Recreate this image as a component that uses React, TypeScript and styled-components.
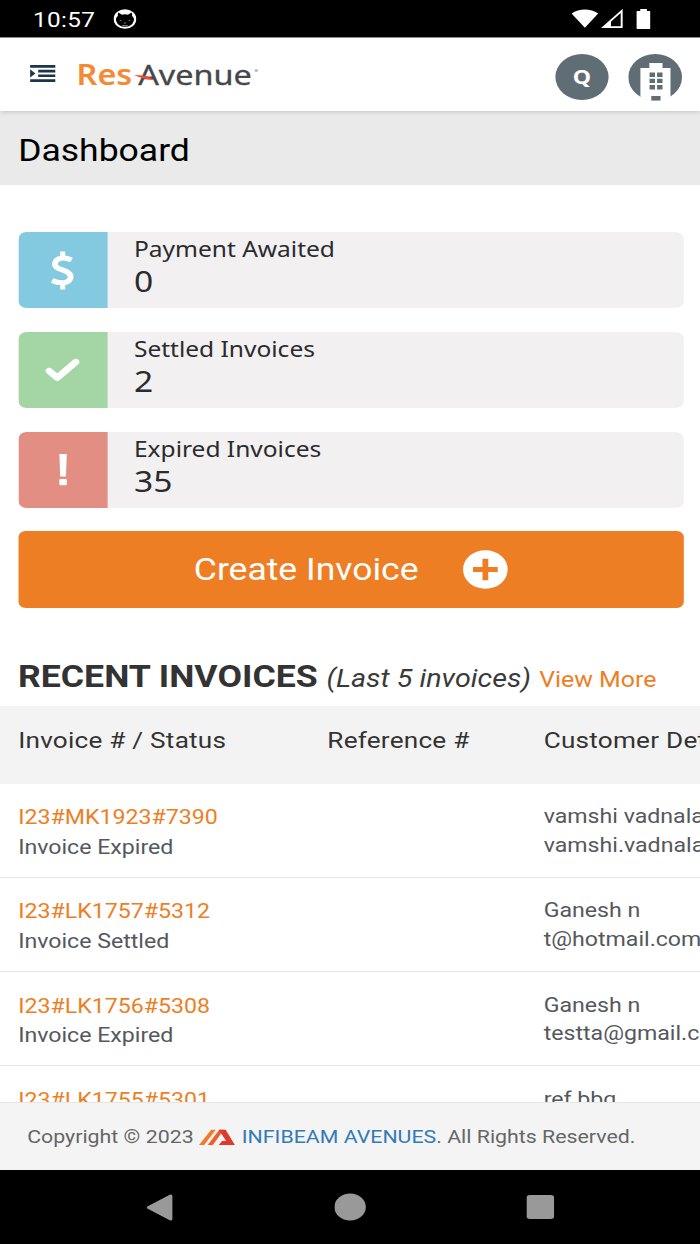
import React from 'react';
import styled, { createGlobalStyle } from 'styled-components';

const GlobalStyle = createGlobalStyle`
  * { box-sizing: border-box; }
  body { margin: 0; background: #fff; overflow: hidden; }
`;

/* The phone screen is 605 units wide and is shown stretched to the 700px viewport. */
const Viewport = styled.div`
  width: 700px;
  height: 1244px;
  overflow: hidden;
`;

const Screen = styled.div`
  width: 605px;
  height: 1244px;
  display: flex;
  flex-direction: column;
  overflow: hidden;
  background: #fff;
  transform: scaleX(1.157025);
  transform-origin: 0 0;
  font-family: Roboto, 'Liberation Sans', sans-serif;
  color: #333;
`;

const StatusBar = styled.div`
  flex: none;
  height: 37px;
  display: flex;
  align-items: center;
  background: #000;
  color: #fff;
  padding: 1px 43px 0 28.5px;
`;

const Clock = styled.span`
  font-size: 21px;
  letter-spacing: 0.3px;
  line-height: 24px;
  padding-top: 1px;
  margin-right: 16px;
`;

const StatusIcons = styled.div`
  margin-left: auto;
  display: flex;
  align-items: center;
`;

const SignalIcon = styled.svg`
  margin: 0 11px 0 2px;
`;

const Header = styled.header`
  flex: none;
  position: relative;
  z-index: 1;
  height: 74px;
  display: flex;
  align-items: flex-start;
  background: #fff;
  border-top: 1px solid #8a8a8a;
  padding: 0 15.5px 0 26.2px;
  box-shadow: 0 1px 4px rgba(0, 0, 0, 0.16);
`;

const MenuButton = styled.div`
  margin-top: 27px;
  line-height: 0;
`;

const Logo = styled.div`
  position: relative;
  margin: 18px 0 0 18px;
  display: flex;
  font-family: 'Noto Sans', 'Open Sans', sans-serif;
  font-size: 28px;
  line-height: 36px;
  white-space: nowrap;
`;

const LogoRes = styled.span`
  color: #f58a33;
  font-weight: 600;
  margin-right: 5px;
`;

const LogoAvenue = styled.span`
  color: #45474a;
  font-size: 28px;
  font-weight: 400;
  -webkit-text-stroke: 0.3px #45474a;
`;

const LogoSwoosh = styled.svg`
  position: absolute;
  left: 50px;
  top: 18px;
`;

const LogoMark = styled.span`
  width: 3px;
  height: 3px;
  border-radius: 50%;
  background: #bbb;
  margin: 13px 0 0 2px;
`;

const Avatars = styled.div`
  margin: 16px 0 0 auto;
  display: flex;
  gap: 17px;
`;

const Avatar = styled.div`
  width: 46px;
  height: 46px;
  border-radius: 50%;
  background: #616d75;
  color: #fff;
  font-family: 'Noto Sans', sans-serif;
  font-size: 20px;
  font-weight: 700;
  line-height: 45px;
  text-align: center;
`;

const TitleBar = styled.h1`
  flex: none;
  margin: 0;
  height: 74px;
  padding: 0 15.7px;
  background: #eaeaea;
  color: #000;
  font-size: 30.7px;
  font-weight: 400;
  line-height: 79px;
`;

const Main = styled.main`
  flex: 1;
  min-height: 0;
  overflow: hidden;
  display: flex;
  flex-direction: column;
`;

const Summary = styled.section`
  flex: none;
  display: flex;
  flex-direction: column;
  gap: 23.3px;
  padding: 46.8px 14.4px 0 15.6px;
`;

const Card = styled.div`
  height: 76.6px;
  display: flex;
  border-radius: 7px;
  overflow: hidden;
  background: #f2f0f1;
`;

const CardIcon = styled.div<{ $color: string }>`
  width: 77px;
  display: flex;
  align-items: center;
  justify-content: center;
  background: ${(p) => p.$color};
`;

const CardBody = styled.div`
  padding: 2px 0 0 23.2px;
  font-family: 'Noto Sans', 'Open Sans', sans-serif;
  color: #2b2b2d;
`;

const CardLabel = styled.div`
  font-size: 21.2px;
  line-height: 30px;
`;

const CardValue = styled.div`
  font-size: 29px;
  line-height: 33px;
`;

const CreateButton = styled.button`
  height: 76.6px;
  display: flex;
  align-items: center;
  justify-content: center;
  gap: 38px;
  border: 0;
  border-radius: 6px;
  padding: 0;
  background: #ee7e24;
  color: #fff;
  font: 400 30.7px Roboto, sans-serif;
`;

const ListHeading = styled.h2`
  flex: none;
  height: 98.2px;
  margin: 0;
  padding: 50px 0 0 15.5px;
  display: flex;
  align-items: baseline;
  font-size: 30.8px;
  line-height: 38px;
  font-weight: 700;
  white-space: nowrap;
`;

const Note = styled.em`
  margin-left: 7.5px;
  font-size: 24.85px;
  font-weight: 400;
  color: #3a3a3a;
`;

const MoreLink = styled.a`
  margin-left: 7px;
  font-size: 21.5px;
  font-weight: 400;
  color: #ee7e24;
`;

const Row = styled.div`
  flex: none;
  height: 94.3px;
  display: grid;
  grid-template-columns: 267.2px 187px 300px;
  padding: 19.5px 0 0 15.7px;
  border-bottom: 1.5px solid #e6e6e6;
  color: #55585c;
  font-size: 20px;
  white-space: nowrap;
`;

const HeadRow = styled(Row)`
  height: 77.3px;
  padding-top: 20.3px;
  border-bottom: 0;
  background: #f3f3f3;
  color: #333;
  font-size: 22.6px;
  letter-spacing: 0.2px;
  line-height: 28px;
`;

const Invoice = styled.div`
  line-height: 29.6px;
`;

const InvoiceId = styled.a`
  display: block;
  color: #ee7e24;
`;

const Customer = styled.div`
  margin-top: -1px;
  line-height: 28.6px;
`;

const Footer = styled.footer`
  flex: none;
  height: 68.5px;
  display: flex;
  align-items: center;
  padding: 1px 0 0 23.5px;
  border-top: 1.5px solid #e6e6e6;
  background: #f4f4f4;
  color: #666;
  font-size: 18.45px;
  white-space: pre;
`;

const Company = styled.a`
  color: #337ab7;
  margin-left: 1.5px;
`;

const NavBar = styled.nav`
  flex: none;
  height: 74px;
  display: flex;
  align-items: center;
  justify-content: space-between;
  padding: 0 126px;
  background: #000;
`;

const cards = [
  { label: 'Payment Awaited', value: 0, color: '#83cae0', icon: 'dollar' },
  { label: 'Settled Invoices', value: 2, color: '#a3d6a4', icon: 'check' },
  { label: 'Expired Invoices', value: 35, color: '#e28e82', icon: 'alert' },
];

const invoices = [
  { id: 'I23#MK1923#7390', status: 'Invoice Expired', name: 'vamshi vadnala', email: 'vamshi.vadnala@gmail.com' },
  { id: 'I23#LK1757#5312', status: 'Invoice Settled', name: 'Ganesh n', email: 't@hotmail.com' },
  { id: 'I23#LK1756#5308', status: 'Invoice Expired', name: 'Ganesh n', email: 'testta@gmail.com' },
  { id: 'I23#LK1755#5301', status: '', name: 'ref bbq', email: '' },
];

const Glyph = ({ name }: { name: string }) => {
  if (name === 'dollar') {
    return (
      <svg width="20" height="39" viewBox="0 0 20 39" fill="none" stroke="#fff" strokeWidth="5">
        <path d="M17.800 9C14.500 7.300 11.500 6.800 8.800 7.300C3.300 8.300 2 14 5.500 16.800C8 18.800 12 19.200 14.800 21.500C19 25 17 31 11 31.700C7.500 32 4.500 31.300 1 29.500" />
        <path d="M10.200 .5V7M10.200 32V38.500" strokeWidth="4.300" />
      </svg>
    );
  }
  if (name === 'check') {
    return (
      <svg width="30" height="24" viewBox="0 0 30 24" fill="none" stroke="#fff" strokeWidth="6.200" strokeLinecap="round" strokeLinejoin="round">
        <path d="M3.500 13L10.500 19.800L26.500 4" />
      </svg>
    );
  }
  return (
    <svg width="7" height="32" viewBox="0 0 7 32" fill="#fff">
      <path d="M.3 0H6.700L6 22.500H1Z" />
      <rect x=".3" y="25" width="6.400" height="6.300" rx="1" />
    </svg>
  );
};

export default function App() {
  return (
    <Viewport>
      <GlobalStyle />
      <Screen>
        <StatusBar>
          <Clock>10:57</Clock>
          <svg width="20" height="20" viewBox="0 0 20 20">
            <circle cx="10" cy="10" r="9.800" fill="#fff" />
            <path d="M4.300 3.600L7.400 5.700Q10 5 12.600 5.700L15.700 3.600Q16.500 5.300 16.100 7.100Q18.300 9 17.600 12A7.900 7.900 0 0 1 2.400 12Q1.700 9 3.900 7.100Q3.500 5.300 4.300 3.600Z" fill="#000" />
            <path d="M5.500 11.500h1.300M13.200 11.500h1.300M9 14h2M7.500 16.500h5" stroke="#888" strokeWidth=".8" />
          </svg>
          <StatusIcons>
            <svg width="23" height="20" viewBox="0 0 23 20">
              <path d="M0 4.500C6.500-.8 16.500-.8 23 4.500L11.500 18.800Z" fill="#fff" />
            </svg>
            <SignalIcon width="20" height="20" viewBox="0 0 20 20">
              <path d="M18.300 2V18.200H2.500Z" fill="none" stroke="#fff" strokeWidth="1.700" />
              <path d="M1.500 19L9 11.500V19Z" fill="#fff" />
            </SignalIcon>
            <svg width="12.500" height="20" viewBox="0 0 13 20" preserveAspectRatio="none">
              <path d="M3.500 0H9.500V2H12Q13 2 13 3V19Q13 20 12 20H1Q0 20 0 19V3Q0 2 1 2H3.500Z" fill="#fff" />
            </svg>
          </StatusIcons>
        </StatusBar>

        <Header>
          <MenuButton>
            <svg width="22" height="18" viewBox="0 0 22 18" fill="#1d3549">
              <path d="M0 0H22V2.700H0ZM7 4.700H22V7.400H7ZM7 9.400H22V12.100H7ZM0 14.200H22V16.900H0ZM0 4.300L4.600 8.400L0 12.500Z" />
            </svg>
          </MenuButton>
          <Logo>
            <LogoRes>Res</LogoRes>
            <LogoAvenue>Avenue</LogoAvenue>
            <LogoMark />
            <LogoSwoosh width="18" height="7" viewBox="0 0 18 7">
              <path d="M0 1.300C6 1 12 1.200 17 6C11 6.200 6 4 0 1.300Z" fill="#ee4b32" />
            </LogoSwoosh>
          </Logo>
          <Avatars>
            <Avatar>Q</Avatar>
            <svg width="46.500" height="46.500" viewBox="0 0 46.500 46.500">
              <circle cx="23.250" cy="23.250" r="23.200" fill="#616d75" />
              <path d="M10.500 46.500V14H18.200V9H29.600V14H36.500V46.500Z" fill="#fff" />
              <path d="M18.400 18.600h4.700v4.300h-4.700zM24.900 18.600h4.700v4.300h-4.700zM18.400 24.800h4.700v4.300h-4.700zM24.900 24.800h4.700v4.300h-4.700zM18.400 31h4.700v4.500h-4.700zM24.900 31h4.700v4.500h-4.700zM19.900 42h8v4.500h-8z" fill="#616d75" />
            </svg>
          </Avatars>
        </Header>

        <TitleBar>Dashboard</TitleBar>

        <Main>
          <Summary>
            {cards.map((card) => (
              <Card key={card.label}>
                <CardIcon $color={card.color}>
                  <Glyph name={card.icon} />
                </CardIcon>
                <CardBody>
                  <CardLabel>{card.label}</CardLabel>
                  <CardValue>{card.value}</CardValue>
                </CardBody>
              </Card>
            ))}
            <CreateButton>
              Create Invoice
              <svg width="39" height="39" viewBox="0 0 39 39">
                <circle cx="19.500" cy="19.500" r="19.300" fill="#fff" />
                <path d="M19.500 8.800V30.200M8.800 19.500H30.200" stroke="#ee7e24" strokeWidth="5" />
              </svg>
            </CreateButton>
          </Summary>

          <ListHeading>
            RECENT INVOICES
            <Note>(Last 5 invoices)</Note>
            <MoreLink>View More</MoreLink>
          </ListHeading>

          <HeadRow>
            <div>Invoice # / Status</div>
            <div>Reference #</div>
            <div>Customer Details</div>
          </HeadRow>
          {invoices.map((invoice) => (
            <Row key={invoice.id}>
              <Invoice>
                <InvoiceId>{invoice.id}</InvoiceId>
                {invoice.status}
              </Invoice>
              <div />
              <Customer>
                <div>{invoice.name}</div>
                <div>{invoice.email}</div>
              </Customer>
            </Row>
          ))}
        </Main>

        <Footer>
          {'Copyright © 2023 '}
          <svg width="31" height="16" viewBox="0 0 31 16">
            <path d="M0 16L10.500 .8H14.500L4.500 16Z" fill="#f07a2e" />
            <path d="M7.500 16L17.500 .8H21.500L12 16Z" fill="#ef5f2a" />
            <path d="M17 .8H23L31 16H17L20 12H23.500L19.500 5Z" fill="#dc3a2c" />
          </svg>
          <Company> INFIBEAM AVENUES</Company>. All Rights Reserved.
        </Footer>

        <NavBar>
          <svg width="24" height="27" viewBox="0 0 24 27">
            <path d="M2.500 13.500L21.500 2V25Z" fill="#999" stroke="#999" strokeWidth="3" strokeLinejoin="round" />
          </svg>
          <svg width="28" height="28" viewBox="0 0 28 28">
            <circle cx="13.600" cy="14" r="13.600" fill="#999" />
          </svg>
          <svg width="24" height="24" viewBox="0 0 24 24">
            <rect width="24" height="24" rx="3" fill="#999" />
          </svg>
        </NavBar>
      </Screen>
    </Viewport>
  );
}
